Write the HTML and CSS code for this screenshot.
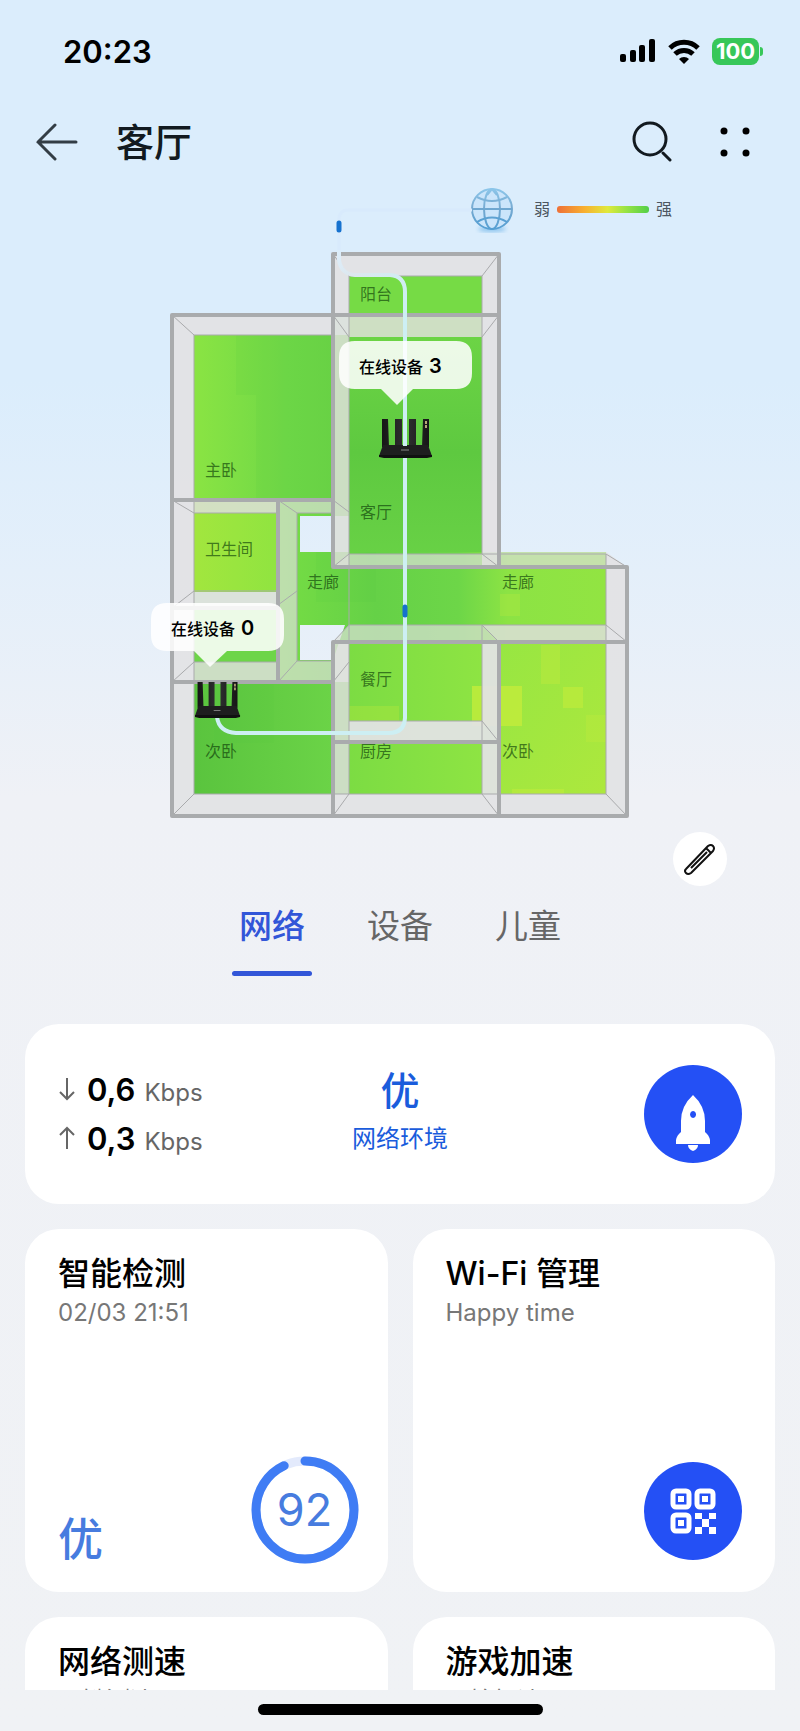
FILE: index.html
```html
<!DOCTYPE html>
<html lang="zh-CN">
<head>
  <meta charset="UTF-8">
  <meta name="viewport" content="width=device-width, initial-scale=1.0">
  <title>客厅</title>
  <link rel="stylesheet" href="styles.css">
</head>
<body>
  <div class="screen">
    <div class="status-bar">
      <span class="time">20:23</span>
      <div class="status-icons">
        <svg width="36" height="24" viewBox="0 0 36 24">
          <rect x="0" y="15" width="6" height="8" rx="2"/>
          <rect x="10" y="11" width="6" height="12" rx="2"/>
          <rect x="19" y="6" width="6" height="17" rx="2"/>
          <rect x="29" y="0" width="6" height="23" rx="2"/>
        </svg>
        <svg width="34" height="25" viewBox="0 0 34 25">
          <path d="M3 9a20 20 0 0 1 28 0" fill="none" stroke="#000" stroke-width="5"/>
          <path d="M8 15a13 13 0 0 1 18 0" fill="none" stroke="#000" stroke-width="5"/>
          <path d="M12 20a7 7 0 0 1 10 0L17 25z"/>
        </svg>
        <div class="battery">100</div>
      </div>
    </div>

    <header class="header">
      <button class="icon-btn" aria-label="返回">
        <svg width="42" height="40" viewBox="0 0 42 40" fill="none" stroke="#333d45" stroke-width="3" stroke-linecap="round">
          <path d="M2 20H40M19 3L2 20l17 17"/>
        </svg>
      </button>
      <h1>客厅</h1>
      <button class="icon-btn" aria-label="搜索">
        <svg width="40" height="42" viewBox="0 0 40 42" fill="none" stroke="#121a20" stroke-width="3" stroke-linecap="round">
          <circle cx="18" cy="18" r="16"/>
          <path d="M31 32l7 7"/>
        </svg>
      </button>
      <button class="icon-btn" aria-label="更多">
        <svg width="30" height="30" viewBox="0 0 30 30">
          <circle cx="4" cy="4" r="3.500"/><circle cx="26" cy="4" r="3.500"/>
          <circle cx="4" cy="26" r="3.500"/><circle cx="26" cy="26" r="3.500"/>
        </svg>
      </button>
    </header>

    <main class="content">
      <section class="plan">
        <svg class="plan-map" viewBox="0 182 800 650">
          <defs>
            <linearGradient id="signal">
              <stop offset="0" stop-color="#ee7038"/><stop offset=".3" stop-color="#f8b030"/>
              <stop offset=".55" stop-color="#dfe93c"/><stop offset=".75" stop-color="#98e344"/>
              <stop offset="1" stop-color="#52cf48"/>
            </linearGradient>
            <linearGradient id="main-room">
              <stop offset="0" stop-color="#8ae443"/><stop offset=".6" stop-color="#70d847"/><stop offset="1" stop-color="#69d245"/>
            </linearGradient>
            <linearGradient id="living" x2="0" y2="1">
              <stop offset="0" stop-color="#6cd445"/><stop offset=".5" stop-color="#5ec940"/><stop offset="1" stop-color="#69d246"/>
            </linearGradient>
            <linearGradient id="toilet">
              <stop offset="0" stop-color="#a2e63e"/><stop offset="1" stop-color="#90e440"/>
            </linearGradient>
            <linearGradient id="hall">
              <stop offset="0" stop-color="#76dd44"/><stop offset=".3" stop-color="#65d147"/>
              <stop offset=".55" stop-color="#6dd648"/><stop offset=".7" stop-color="#8ce344"/><stop offset="1" stop-color="#92e442"/>
            </linearGradient>
            <linearGradient id="bed-left">
              <stop offset="0" stop-color="#5ac43e"/><stop offset="1" stop-color="#6dd548"/>
            </linearGradient>
            <linearGradient id="dining">
              <stop offset="0" stop-color="#7cdc43"/><stop offset="1" stop-color="#90e543"/>
            </linearGradient>
            <linearGradient id="bed-right" x2="1" y2="1">
              <stop offset="0" stop-color="#97e642"/><stop offset="1" stop-color="#ade83d"/>
            </linearGradient>
            <linearGradient id="globe" x2="0" y2="1">
              <stop offset="0" stop-color="#8cc6ea"/><stop offset=".5" stop-color="#76a9d0"/><stop offset="1" stop-color="#559fd3"/>
            </linearGradient>
            <linearGradient id="cable" gradientUnits="userSpaceOnUse" x1="338" y1="250" x2="405" y2="300">
              <stop offset="0" stop-color="#dceefb"/><stop offset=".3" stop-color="#dde7ee"/><stop offset="1" stop-color="#cdeff3"/>
            </linearGradient>
            <linearGradient id="antenna">
              <stop offset="0" stop-color="#161616"/><stop offset=".5" stop-color="#303032"/><stop offset="1" stop-color="#161616"/>
            </linearGradient>
            <g id="router">
              <path fill="url(#antenna)" d="M3 0h6l1 28H3zM16 0h7v28h-7zM30 0h7v28h-7zM44 0h6v28h-7z"/>
              <path d="M4 26h45l4 11H0z" fill="#1e1e1f"/>
              <path d="M0 36h53v2l-5 1H5l-5-1z" fill="#101010"/>
              <path d="M22 31h8" stroke="#888"/>
              <path d="M47 2v7" stroke="#b7a878" stroke-width="2" stroke-dasharray="3 1"/>
            </g>
            <filter id="soft"><feGaussianBlur stdDeviation="2"/></filter>
          </defs>

          <!-- globe and signal legend -->
          <ellipse cx="492" cy="229" rx="14" ry="3" fill="#8cc4ee" filter="url(#soft)"/>
          <circle cx="492" cy="209" r="20" fill="#cbe5fb"/>
          <g fill="none" stroke="url(#globe)" stroke-width="2">
            <circle cx="492" cy="209" r="20"/>
            <ellipse cx="492" cy="209" rx="8" ry="20"/>
            <path d="M472 209q20 .100 40 0M477 197q15 8 30 0M477 222q15-9 30 0M492 189l-5 6M492 189l5 6"/>
          </g>
          <path d="M472 210H348q-8 0-9 8v34" fill="none" stroke="#d8eafc" stroke-width="3"/>
          <text class="legend" x="534" y="215">弱</text>
          <rect x="557" y="206" width="92" height="7" rx="3" fill="url(#signal)"/>
          <text class="legend" x="656" y="215">强</text>

          <!-- signal coverage of each room -->
          <rect x="349" y="276" width="133" height="61" fill="#76db45"/>
          <rect x="194" y="335" width="155" height="165" fill="url(#main-room)"/>
          <rect x="349" y="337" width="133" height="230" fill="url(#living)"/>
          <rect x="194" y="500" width="84" height="92" fill="url(#toilet)"/>
          <rect x="194" y="592" width="84" height="90" fill="#6dd548"/>
          <path d="M278 500h71v16h-49v36h306v90H333v40h-55zM300 625v35h33l12-35z" fill="url(#hall)" fill-rule="evenodd"/>
          <rect x="194" y="682" width="155" height="112" fill="url(#bed-left)"/>
          <rect x="349" y="642" width="150" height="152" fill="url(#dining)"/>
          <rect x="499" y="642" width="107" height="152" fill="url(#bed-right)"/>
          <g fill="#c3ec3b">
            <rect x="472" y="686" width="50" height="40" opacity=".8"/>
            <rect x="563" y="687" width="20" height="21" opacity=".6"/>
            <rect x="541" y="645" width="19" height="39" opacity=".4"/>
            <rect x="586" y="715" width="20" height="27" opacity=".3"/>
            <rect x="349" y="706" width="50" height="15" opacity=".3"/>
            <rect x="512" y="789" width="52" height="5" opacity=".5"/>
            <rect x="500" y="594" width="20" height="22" opacity=".25"/>
          </g>
          <g fill="#55c840" opacity=".12">
            <rect x="236" y="335" width="97" height="60"/>
            <rect x="256" y="375" width="77" height="125"/>
            <rect x="316" y="552" width="60" height="50"/>
            <rect x="214" y="683" width="60" height="60"/>
          </g>

          <!-- wall faces -->
          <g class="face">
            <path d="M333 254h166v61H482v-39H349v39h-16z"/>
            <path d="M172 315h161v20H194v165h-22z"/>
            <path d="M172 500h22v182h-22zM172 682h22v112h139v22H172z"/>
            <path d="M482 315h17v252h-17z"/>
            <path d="M606 552l21 15v249H499v-22h107z"/>
            <path d="M194 592h84v18h-84z"/>
            <path d="M349 721h133v21H349zM482 642h17v152h-17zM333 794h166v22H333z"/>
          </g>
          <g class="face tint">
            <path d="M349 315h133v22H349zM333 315h16v252h-16z"/>
            <path d="M194 500h84v13h-84zM194 662h84v20h-84z"/>
            <path d="M333 642h16v152h-16zM482 625h124v17H499z"/>
          </g>
          <g class="face clear">
            <path d="M278 500h55v13h-36v148h36v21h-55z"/>
            <path d="M349 554h133l17 13H333zM499 552h107v15H499z"/>
            <path d="M349 625h133l17 17H333z"/>
          </g>

          <g class="edge">
            <path d="M349 794V276h133v278H349M194 794V335h139M194 513h84M297 661V513h36M297 661h36M194 591h84M194 662h84"/>
            <path d="M482 554h124v240H194M349 625h257M482 625v169M349 721h133"/>
            <path d="M333 254l16 22M499 254l-17 22M172 315l22 20M333 315l16 22M499 315l-17 22M172 500l22 13M278 500l19 13M333 500l16 12M333 567l16-13M499 567l-17-13M627 567l-21-13"/>
            <path d="M172 608l22-17M278 605l19-14M172 682l22-20M278 682l19-21M333 642l16-17M333 682l16-20M499 642l-17-17M627 642l-21-17M499 742l-17-21M172 816l22-22M333 816l16-22M499 816l-17-22M627 816l-21-22"/>
          </g>
          <g class="wall">
            <path d="M333 315V254h166v313h128v249H172V315h327M333 315v252h166M172 500h161M278 500v182M172 682h161M172 608h106"/>
            <path d="M333 816V642h294M499 642v174M333 742h166"/>
          </g>

          <g class="room">
            <text x="360" y="300">阳台</text>
            <text x="205" y="476">主卧</text>
            <text x="360" y="518">客厅</text>
            <text x="205" y="555">卫生间</text>
            <text x="307" y="588">走廊</text>
            <text x="502" y="588">走廊</text>
            <text x="360" y="685">餐厅</text>
            <text x="360" y="757">厨房</text>
            <text x="205" y="757">次卧</text>
            <text x="502" y="757">次卧</text>
          </g>

          <!-- routers and the link between them -->
          <use href="#router" x="379" y="419"/>
          <g fill="none" stroke="url(#cable)" stroke-width="4">
            <path d="M339 250v10q2 14 16 15h35q15 1 15 17v154M405 458v260q-1 15-16 15H236q-17-1-19-16"/>
          </g>
          <use href="#router" transform="translate(195 682) scale(.85 .92)"/>
          <g stroke="#1672cf" stroke-width="5" stroke-linecap="round">
            <path d="M339 223v7M405 607v8"/>
          </g>

          <g class="bubble">
            <path d="M355 341h101q16 0 16 16v16q0 16-16 16h-43l-16 16-16-16h-26q-16 0-16-16v-16q0-16 16-16z"/>
            <text x="359" y="373">在线设备</text>
            <text class="count" x="429" y="373">3</text>
            <path d="M167 603h101q16 0 16 16v16q0 16-16 16h-41l-17 16-16-16h-27q-16 0-16-16v-16q0-16 16-16z"/>
            <text x="171" y="635">在线设备</text>
            <text class="count" x="241" y="635">0</text>
          </g>
        </svg>
        <button class="edit-btn" aria-label="编辑">
          <svg width="34" height="34" viewBox="0 0 34 34" fill="none" stroke="#111" stroke-width="2" stroke-linejoin="round">
            <path d="M3 27L25 4q3-2 5 0t0 5L8 31q-3 2-5 0t0-4zM23 6l5 5M8 26L24 10"/>
          </svg>
        </button>
      </section>

      <nav class="tabs">
        <button class="tab active">网络</button>
        <button class="tab">设备</button>
        <button class="tab">儿童</button>
      </nav>

      <section class="cards">
        <div class="card network">
          <div class="speeds">
            <div class="speed">
              <svg width="20" height="24" viewBox="0 0 20 24"><path d="M9 1v21M2 15l7 7 7-7"/></svg>
              <b>0,6</b><span>Kbps</span>
            </div>
            <div class="speed">
              <svg width="20" height="24" viewBox="0 0 20 24"><path d="M9 23V2M2 9l7-7 7 7"/></svg>
              <b>0,3</b><span>Kbps</span>
            </div>
          </div>
          <div class="quality">
            <strong>优</strong>
            <span>网络环境</span>
          </div>
          <button class="round-btn" aria-label="一键加速">
            <svg width="34" height="56" viewBox="0 0 34 56" fill="#fff">
              <path fill-rule="evenodd" d="M17 0q-12 11-12 26v11q-4 3-5 8v4h34v-4q-1-5-5-8V26Q29 11 17 0zM17 16a3 3.500 0 1 0 .1 0z"/>
              <path d="M12 50h10q0 4-5 6-5-2-5-6z"/>
            </svg>
          </button>
        </div>

        <div class="card tile">
          <h2>智能检测</h2>
          <p>02/03 21:51</p>
          <div class="tile-foot">
            <strong class="grade">优</strong>
            <div class="score">
              <svg viewBox="0 0 108 108" fill="none" stroke-width="9">
                <circle cx="54" cy="54" r="49" stroke="#e3eafc"/>
                <circle cx="54" cy="54" r="49" stroke="#3f7cf4" stroke-linecap="round" pathLength="100" stroke-dasharray="93 100" transform="rotate(-90 54 54)"/>
              </svg>
              <span>92</span>
            </div>
          </div>
        </div>

        <div class="card tile">
          <h2>Wi-Fi 管理</h2>
          <p>Happy time</p>
          <div class="tile-foot">
            <button class="round-btn" aria-label="Wi-Fi 二维码">
              <svg width="46" height="46" viewBox="0 0 46 46" fill="none" stroke="#fff" stroke-width="5">
                <rect x="3" y="3" width="16" height="16" rx="3"/>
                <rect x="27" y="3" width="16" height="16" rx="3"/>
                <rect x="3" y="27" width="16" height="16" rx="3"/>
                <path fill="#fff" stroke="none" d="M8 8h6v6H8zM32 8h6v6h-6zM8 32h6v6H8zM25 25h7v6h-7zM39 25h7v6h-7zM32 31h7v8h-7zM25 39h7v7h-7zM39 39h7v7h-7z"/>
              </svg>
            </button>
          </div>
        </div>

        <div class="card tile">
          <h2>网络测速</h2>
          <p>一键测速</p>
        </div>
        <div class="card tile">
          <h2>游戏加速</h2>
          <p>开始加速</p>
        </div>
      </section>
    </main>

    <div class="home-bar"></div>
  </div>
</body>
</html>
```

FILE: styles.css
```css
* {
  box-sizing: border-box;
}
body {
  margin: 0;
  font-family: Inter, "Noto Sans CJK SC", sans-serif;
  color: #000;
}
h1, h2, p {
  margin: 0;
}
button {
  padding: 0;
  border: none;
  background: none;
  font-family: inherit;
  cursor: pointer;
}
svg {
  display: block;
}
.screen {
  display: flex;
  flex-direction: column;
  height: 100vh;
  background: linear-gradient(#dbedfc 0, #dbedfc 22%, #e4effa 33%, #eff1f6 46%, #f0f2f5 100%);
}

/* status bar */
.status-bar {
  display: flex;
  flex: none;
  justify-content: space-between;
  align-items: center;
  height: 102px;
  padding: 0 37px 0 63px;
}
.time {
  font-size: 31px;
  font-weight: 600;
}
.status-icons {
  display: flex;
  align-items: center;
  gap: 11px;
}
.battery {
  position: relative;
  width: 47px;
  margin-right: 4px;
  border-radius: 8px;
  background: #37c759;
  color: #fff;
  font-size: 22px;
  font-weight: 700;
  line-height: 27px;
  text-align: center;
}
.battery::after {
  content: "";
  position: absolute;
  top: 9px;
  right: -4px;
  width: 3px;
  height: 9px;
  border-radius: 0 3px 3px 0;
  background: #37c759;
}

/* header */
.header {
  display: flex;
  flex: none;
  align-items: center;
  gap: 48px;
  height: 80px;
  padding: 0 50px 0 36px;
}
.header h1 {
  flex: 1;
  margin-left: -10px;
  color: #121a20;
  font-size: 38px;
  font-weight: 500;
  line-height: 48px;
}

/* floor plan */
.content {
  flex: 1;
  min-height: 0;
  overflow: hidden;
}
.plan {
  display: flex;
  flex-direction: column;
}
.plan-map {
  width: 100%;
}
.legend {
  fill: #4c5660;
  font-size: 16px;
}
.face {
  fill: #e2e2e4;
  fill-opacity: .94;
}
.tint {
  fill: #dcdfd8;
  fill-opacity: .86;
}
.clear {
  fill: #dcdfd8;
  fill-opacity: .7;
}
.edge {
  fill: none;
  stroke: #a9aaac;
  stroke-width: 1;
}
.wall {
  fill: none;
  stroke: #a9abad;
  stroke-width: 4;
  stroke-linejoin: round;
}
.room {
  fill: #0b3a08;
  fill-opacity: .65;
  font-size: 16px;
}
.bubble path {
  fill: #fff;
  fill-opacity: .87;
}
.bubble text {
  font-size: 16px;
  font-weight: 500;
}
.bubble .count {
  font-size: 20px;
  font-weight: 600;
}
.edit-btn {
  display: flex;
  align-self: flex-end;
  justify-content: center;
  align-items: center;
  width: 54px;
  height: 54px;
  margin-right: 73px;
  border-radius: 50%;
  background: #fff;
}

/* tabs */
.tabs {
  display: flex;
  justify-content: center;
  gap: 48px;
  margin-bottom: 48px;
}
.tab {
  position: relative;
  width: 80px;
  height: 90px;
  padding-bottom: 14px;
  color: #666;
  font-size: 33px;
  white-space: nowrap;
}
.tab.active {
  color: #3256d8;
  font-weight: 500;
}
.tab.active::after {
  content: "";
  position: absolute;
  right: 0;
  bottom: 0;
  left: 0;
  height: 5px;
  border-radius: 3px;
  background: #3256d8;
}

/* cards */
.cards {
  display: grid;
  grid-template-columns: 1fr 1fr;
  gap: 25px;
  padding: 0 25px;
}
.card {
  border-radius: 34px;
  background: #fff;
}
.network {
  display: grid;
  grid-column: 1 / -1;
  grid-template-columns: 1fr 1fr 1fr;
  align-items: center;
  height: 180px;
  padding: 0 33px;
}
.speed {
  display: flex;
  align-items: baseline;
  gap: 9px;
  height: 49px;
  line-height: 49px;
}
.speed svg {
  fill: none;
  stroke: #666;
  stroke-width: 2;
}
.speed b {
  font-size: 31px;
  font-weight: 600;
}
.speed span {
  color: #666;
  font-size: 24px;
}
.quality {
  display: flex;
  flex-direction: column;
  align-items: center;
  padding-bottom: 7px;
  color: #1a5cdc;
}
.quality strong {
  font-size: 39px;
  font-weight: 500;
  line-height: 56px;
}
.quality span {
  font-size: 24px;
  line-height: 40px;
}
.round-btn {
  display: flex;
  justify-content: center;
  align-items: center;
  width: 98px;
  height: 98px;
  margin-left: auto;
  border-radius: 50%;
  background: #2450f5;
}
.network .round-btn svg {
  margin-top: 18px;
}
.tile {
  display: flex;
  flex-direction: column;
  aspect-ratio: 1;
  padding: 24px 33px 28px;
}
.tile h2 {
  font-size: 32px;
  font-weight: 500;
  line-height: 42px;
}
.tile p {
  color: #777;
  font-size: 24px;
  line-height: 36px;
}
.tile-foot {
  display: flex;
  justify-content: space-between;
  align-items: flex-end;
  margin-top: auto;
}
.tile-foot .round-btn {
  margin-bottom: 4px;
}
.grade {
  color: #477cdf;
  font-size: 45px;
  font-weight: 500;
  line-height: 48px;
}
.score {
  display: grid;
  place-items: center;
  width: 108px;
  margin-right: -4px;
  color: #477cdf;
  font-size: 45px;
}
.score svg,
.score span {
  grid-area: 1 / 1;
}
.score svg {
  width: 100%;
}

.home-bar {
  flex: none;
  align-self: center;
  width: 285px;
  height: 11px;
  margin: 14px 0 16px;
  border-radius: 6px;
  background: #000;
}
```
